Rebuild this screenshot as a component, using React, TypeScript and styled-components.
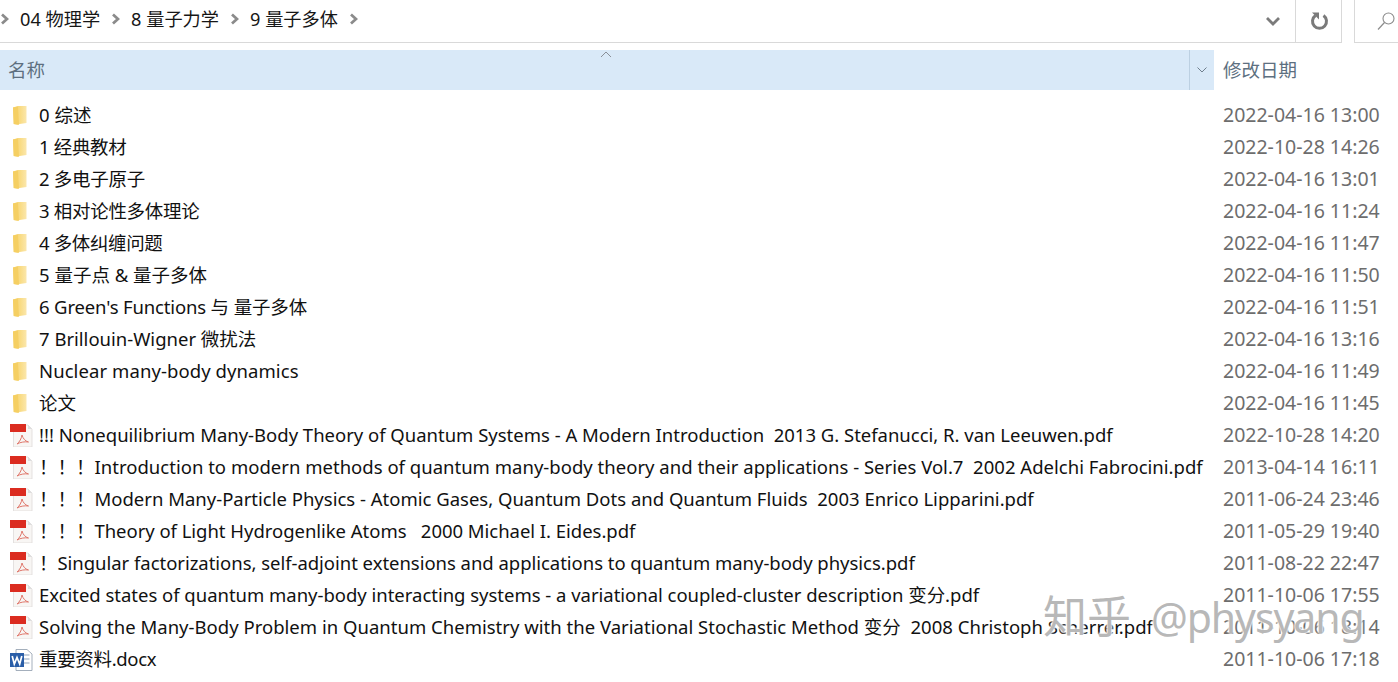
import React from "react";
import styled, { createGlobalStyle } from "styled-components";

const Global = createGlobalStyle`
  html, body { margin: 0; padding: 0; background: #fff; overflow: hidden; }
  #root { width: 1398px; height: 682px; }
`;
const FONT = `"Noto Sans", "Noto Sans CJK SC", sans-serif`;

const Page = styled.div`
  position: relative;
  width: 1398px;
  height: 682px;
  overflow: hidden;
  background: #fff;
  font-family: ${FONT};
  color: #111;
`;
const Toolbar = styled.div`
  display: flex;
  height: 43px;
  box-sizing: border-box;
`;
const AddressBar = styled.div`
  flex: 1;
  display: flex;
  align-items: center;
  border-bottom: 1px solid #d9d9d9;
  border-right: 1px solid #d9d9d9;
  min-width: 0;
`;
const Crumbs = styled.div`
  flex: 1;
  display: flex;
  align-items: center;
  padding-bottom: 4px;
  font-size: 18.2px;
  line-height: 24px;
  color: #161616;
`;
const Crumb = styled.span`
  margin: 0 11px;
  white-space: nowrap;
`;
const Chevron = styled.svg`
  width: 9px;
  height: 12px;
  flex: none;
`;
const Dropdown = styled.div`
  width: 44px;
  height: 42px;
  padding-right: 2px;
  display: flex;
  align-items: center;
  justify-content: center;
  border-right: 1px solid #d9d9d9;
  box-sizing: border-box;
`;
const Refresh = styled.div`
  width: 45px;
  height: 42px;
  display: flex;
  align-items: center;
  justify-content: center;
`;
const Spacer = styled.div`
  width: 12px;
`;
const SearchBox = styled.div`
  width: 44px;
  display: flex;
  align-items: center;
  padding-left: 21px;
  box-sizing: border-box;
  border-left: 1px solid #d9d9d9;
  border-bottom: 1px solid #d9d9d9;
`;
const Header = styled.div`
  display: flex;
  height: 40px;
  margin-top: 7px;
`;
const NameHead = styled.div`
  position: relative;
  width: 1214px;
  display: flex;
  align-items: center;
  justify-content: space-between;
  background: #d9e9f8;
  font-size: 18.5px;
  line-height: 24px;
  color: #5d6f80;
  padding-left: 8px;
  box-sizing: border-box;
`;
const SortCaret = styled.svg`
  position: absolute;
  left: 600px;
  top: 0;
  width: 12px;
  height: 8px;
`;
const HeadMenu = styled.div`
  width: 25px;
  height: 40px;
  display: flex;
  align-items: center;
  justify-content: center;
  border-left: 1px solid #bcd0e2;
  box-sizing: border-box;
`;
const DateHead = styled.div`
  display: flex;
  align-items: center;
  padding-left: 9px;
  font-size: 18.5px;
  line-height: 24px;
  color: #5d6f80;
`;
const List = styled.div`
  display: flex;
  flex-direction: column;
  padding-top: 9px;
`;
const Row = styled.div`
  display: grid;
  grid-template-columns: 1214px 1fr;
  height: 32px;
  align-items: center;
`;
const NameCell = styled.div`
  display: flex;
  align-items: center;
  padding-left: 9px;
  white-space: pre;
  font-size: 18.5px;
  line-height: 24px;
  color: #111;
`;
const IconSlot = styled.svg`
  width: 24px;
  height: 24px;
  margin-right: 6px;
  flex: none;
`;
const FileName = styled.span<{ $fit: number }>`
  letter-spacing: ${(p) => p.$fit}px;
`;
const DateCell = styled.div`
  padding-left: 9px;
  font-size: 19.5px;
  line-height: 24px;
  color: #6d6d6d;
  white-space: nowrap;
`;
const Watermark = styled.div`
  position: absolute;
  left: 1043px;
  top: 586px;
  font-size: 44px;
  line-height: 60px;
  white-space: nowrap;
  color: rgba(165, 165, 165, 0.8);
  text-shadow: 0 0 2px #fff, 0 0 3px #fff, 0 0 3px #fff;
`;
const WatermarkHandle = styled.span`
  font-size: 41px;
  letter-spacing: -1.1px;
  margin-left: 20px;
`;

const Folder = () => (
  <IconSlot viewBox="0 0 24 24">
    <defs>
      <linearGradient id="fold" x1="0" x2="1" y1="0" y2="0">
        <stop offset="0" stopColor="#f6d370" />
        <stop offset="0.55" stopColor="#f9dc85" />
        <stop offset="1" stopColor="#fbe7ad" />
      </linearGradient>
    </defs>
    <path d="M4 4.5 L9 3 L17.5 3 L17.5 20 L10.5 21 L9 22 L4.5 21 Z" fill="url(#fold)" />
    <path d="M4 4.5 L9 3.5 L10 21.5 L5 21 Z" fill="#f5cf63" />
  </IconSlot>
);
const Pdf = () => (
  <IconSlot viewBox="0 0 24 24">
    <path d="M4.5 2 L19 2 L23 6 L23 24 L4.5 24 Z" fill="#f8f6f4" stroke="#dedbd9" strokeWidth="0.8" />
    <rect x="1" y="1" width="16" height="8" fill="#db2c20" />
    <path d="M19 2 L23 6 L19 6 Z" fill="#dedede" />
    <path d="M8 21 C10.5 19 12.5 15.5 13 12 C14 15.5 16 18 19.5 19 C16 18.5 11.5 19 8 21 Z" fill="none" stroke="#e0776b" strokeWidth="1" />
  </IconSlot>
);
const Word = () => (
  <IconSlot viewBox="0 0 24 24">
    <path d="M7 2.5 L18 2.5 L23 7 L23 23.5 L7 23.5 Z" fill="#fff" stroke="#9aa6b4" strokeWidth="0.9" />
    <path d="M15 8 H20.5 M15 12 H20.5 M15 16 H20.5" stroke="#8fa3bb" strokeWidth="1.2" />
    <rect x="1" y="6" width="14" height="14" fill="#2a5ea8" />
    <path d="M3.2 9 L5.3 17 L8 10.5 L10.7 17 L12.8 9" fill="none" stroke="#fff" strokeWidth="1.7" />
  </IconSlot>
);
const Arrow = () => (
  <Chevron viewBox="0 0 9 12">
    <path d="M2 1.5 L7 6 L2 10.5" fill="none" stroke="#8b8b8b" strokeWidth="2.8" />
  </Chevron>
);

type Kind = "folder" | "pdf" | "word";
const rows: { k: Kind; n: string; d: string; f?: number }[] = [
  { k: "folder", n: "0 综述", d: "2022-04-16 13:00" },
  { k: "folder", n: "1 经典教材", d: "2022-10-28 14:26", f: -0.33 },
  { k: "folder", n: "2 多电子原子", d: "2022-04-16 13:01", f: -0.28 },
  { k: "folder", n: "3 相对论性多体理论", d: "2022-04-16 11:24", f: -0.3 },
  { k: "folder", n: "4 多体纠缠问题", d: "2022-04-16 11:47", f: -0.37 },
  { k: "folder", n: "5 量子点 & 量子多体", d: "2022-04-16 11:50" },
  { k: "folder", n: "6 Green's Functions 与 量子多体", d: "2022-04-16 11:51", f: -0.15 },
  { k: "folder", n: "7 Brillouin-Wigner 微扰法", d: "2022-04-16 13:16" },
  { k: "folder", n: "Nuclear many-body dynamics", d: "2022-04-16 11:49", f: 0.08 },
  { k: "folder", n: "论文", d: "2022-04-16 11:45" },
  { k: "pdf", n: "!!! Nonequilibrium Many-Body Theory of Quantum Systems - A Modern Introduction  2013 G. Stefanucci, R. van Leeuwen.pdf", d: "2022-10-28 14:20", f: -0.01 },
  { k: "pdf", n: "！！！Introduction to modern methods of quantum many-body theory and their applications - Series Vol.7  2002 Adelchi Fabrocini.pdf", d: "2013-04-14 16:11", f: 0.015 },
  { k: "pdf", n: "！！！Modern Many-Particle Physics - Atomic Gases, Quantum Dots and Quantum Fluids  2003 Enrico Lipparini.pdf", d: "2011-06-24 23:46" },
  { k: "pdf", n: "！！！Theory of Light Hydrogenlike Atoms   2000 Michael I. Eides.pdf", d: "2011-05-29 19:40", f: -0.03 },
  { k: "pdf", n: "！Singular factorizations, self-adjoint extensions and applications to quantum many-body physics.pdf", d: "2011-08-22 22:47", f: -0.03 },
  { k: "pdf", n: "Excited states of quantum many-body interacting systems - a variational coupled-cluster description 变分.pdf", d: "2011-10-06 17:55", f: -0.02 },
  { k: "pdf", n: "Solving the Many-Body Problem in Quantum Chemistry with the Variational Stochastic Method 变分  2008 Christoph Scherrer.pdf", d: "2011-10-06 18:14", f: 0.016 },
  { k: "word", n: "重要资料.docx", d: "2011-10-06 17:18", f: -0.33 },
];

export default function App() {
  return (
    <Page>
      <Global />
      <Toolbar>
        <AddressBar>
          <Crumbs>
            <Arrow />
            <Crumb>04 物理学</Crumb>
            <Arrow />
            <Crumb>8 量子力学</Crumb>
            <Arrow />
            <Crumb>9 量子多体</Crumb>
            <Arrow />
          </Crumbs>
          <Dropdown>
            <svg width="16" height="10" viewBox="0 0 16 10">
              <path d="M2 2 L8 8 L14 2" fill="none" stroke="#7b7b7b" strokeWidth="2.8" />
            </svg>
          </Dropdown>
          <Refresh>
            <svg width="20" height="20" viewBox="0 0 20 20">
              <path d="M6.5 4.5 A7 7 0 1 0 14.5 4.5" fill="none" stroke="#7a7a7a" strokeWidth="3" />
              <path d="M3 1.5 L10 1.5 L10 8.5 Z" fill="#7a7a7a" />
            </svg>
          </Refresh>
        </AddressBar>
        <Spacer />
        <SearchBox>
          <svg width="20" height="20" viewBox="0 0 20 20">
            <circle cx="12.5" cy="7.5" r="5.5" fill="none" stroke="#8c8c8c" strokeWidth="1.1" />
            <path d="M8.5 11.5 L2 18.5" stroke="#8c8c8c" strokeWidth="1.2" />
          </svg>
        </SearchBox>
      </Toolbar>
      <Header>
        <NameHead>
          <SortCaret viewBox="0 0 12 8">
            <path d="M1 7 L6 2 L11 7" fill="none" stroke="#8a9099" strokeWidth="1" />
          </SortCaret>
          名称
          <HeadMenu>
            <svg width="12" height="8" viewBox="0 0 12 8">
              <path d="M1.5 1.5 L6 6 L10.5 1.5" fill="none" stroke="#6f7f8e" strokeWidth="1" />
            </svg>
          </HeadMenu>
        </NameHead>
        <DateHead>修改日期</DateHead>
      </Header>
      <List>
        {rows.map((r) => (
          <Row key={r.n}>
            <NameCell>
              {r.k === "folder" ? <Folder /> : r.k === "pdf" ? <Pdf /> : <Word />}
              <FileName $fit={r.f ?? 0}>{r.n}</FileName>
            </NameCell>
            <DateCell>{r.d}</DateCell>
          </Row>
        ))}
      </List>
      <Watermark>
        知乎
        <WatermarkHandle>@physyang</WatermarkHandle>
      </Watermark>
    </Page>
  );
}
